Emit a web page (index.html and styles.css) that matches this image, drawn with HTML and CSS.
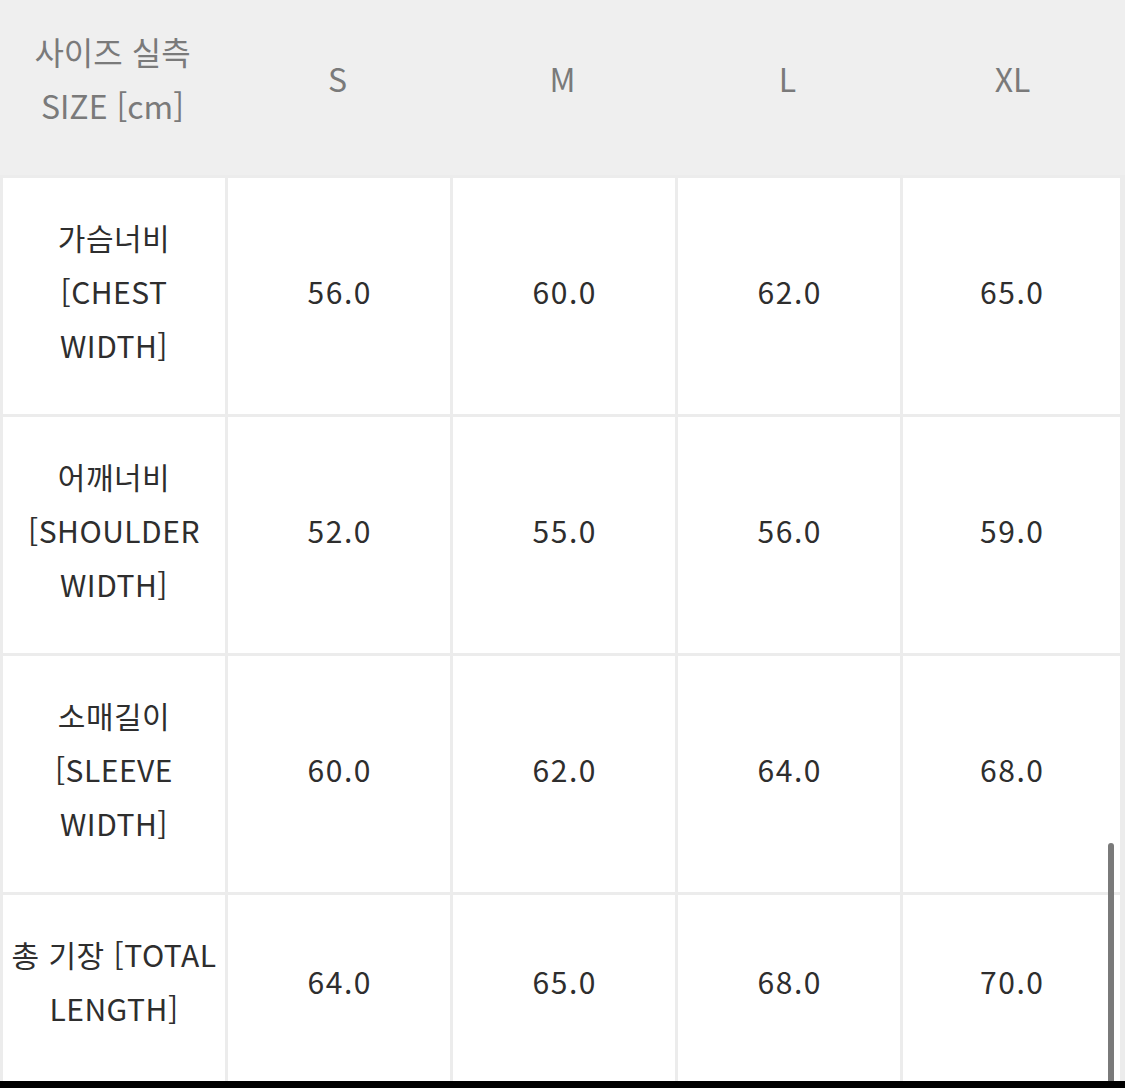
FILE: index.html
```html
<!DOCTYPE html>
<html lang="ko">
<head>
<meta charset="utf-8">
<title>사이즈 실측</title>
<link rel="stylesheet" href="styles.css">
</head>
<body>
<div class="screen">
  <div class="viewport">
    <div class="size-table">
      <div class="head">
        <div class="hcell"><span>사이즈 실측</span><span>SIZE [cm]</span></div>
        <div class="hcell">S</div>
        <div class="hcell">M</div>
        <div class="hcell">L</div>
        <div class="hcell">XL</div>
      </div>
      <div class="row">
        <div class="cell label"><span>가슴너비</span><span>[CHEST</span><span>WIDTH]</span></div>
        <div class="cell num">56.0</div>
        <div class="cell num">60.0</div>
        <div class="cell num">62.0</div>
        <div class="cell num">65.0</div>
      </div>
      <div class="row">
        <div class="cell label"><span>어깨너비</span><span>[SHOULDER</span><span>WIDTH]</span></div>
        <div class="cell num">52.0</div>
        <div class="cell num">55.0</div>
        <div class="cell num">56.0</div>
        <div class="cell num">59.0</div>
      </div>
      <div class="row">
        <div class="cell label"><span>소매길이</span><span>[SLEEVE</span><span>WIDTH]</span></div>
        <div class="cell num">60.0</div>
        <div class="cell num">62.0</div>
        <div class="cell num">64.0</div>
        <div class="cell num">68.0</div>
      </div>
      <div class="row last">
        <div class="cell label"><span>총 기장 [TOTAL</span><span>LENGTH]</span></div>
        <div class="cell num">64.0</div>
        <div class="cell num">65.0</div>
        <div class="cell num">68.0</div>
        <div class="cell num">70.0</div>
      </div>
    </div>
    <div class="scrollbar"></div>
  </div>
  <div class="bottom-bar"></div>
</div>
</body>
</html>
```
FILE: styles.css
```css
html, body {
  margin: 0;
  padding: 0;
}
body {
  background: #ffffff;
  font-family: "Noto Sans CJK KR", "Noto Sans", sans-serif;
}
.screen {
  width: 1125px;
  height: 1088px;
  overflow: hidden;
  display: flex;
  flex-direction: column;
}
.viewport {
  position: relative;
  height: 1081px;
  overflow: hidden;
  background: #ececec;
}
.size-table {
  display: flex;
  flex-direction: column;
  gap: 3px;
}
.head {
  display: grid;
  grid-template-columns: 225px 225px 225px 225px 225px;
  background: #efefef;
  padding: 24px 0 43px;
}
.hcell {
  display: flex;
  flex-direction: column;
  align-items: center;
  justify-content: center;
  color: #7a7a7a;
  font-size: 32px;
  line-height: 54px;
  letter-spacing: 0;
  white-space: nowrap;
}
.row {
  display: grid;
  grid-template-columns: 222px 222px 222px 222px 217px;
  column-gap: 3px;
  padding-left: 3px;
}
.cell {
  background: #ffffff;
  display: flex;
  flex-direction: column;
  align-items: center;
  justify-content: center;
  padding: 32px 0 42px;
  color: #2e2e2e;
  font-size: 30px;
  line-height: 54px;
  text-align: center;
}
.label {
  letter-spacing: 0.5px;
}
.num {
  letter-spacing: 1.5px;
  text-indent: 1.5px;
}
.row.last .cell {
  padding: 32px 0 46px;
}
.label span {
  white-space: nowrap;
}
.scrollbar {
  position: absolute;
  left: 1108px;
  top: 843px;
  width: 6px;
  height: 245px;
  border-radius: 3px;
  background: #7a7a7a;
}
.bottom-bar {
  height: 7px;
  background: #000000;
}
```
